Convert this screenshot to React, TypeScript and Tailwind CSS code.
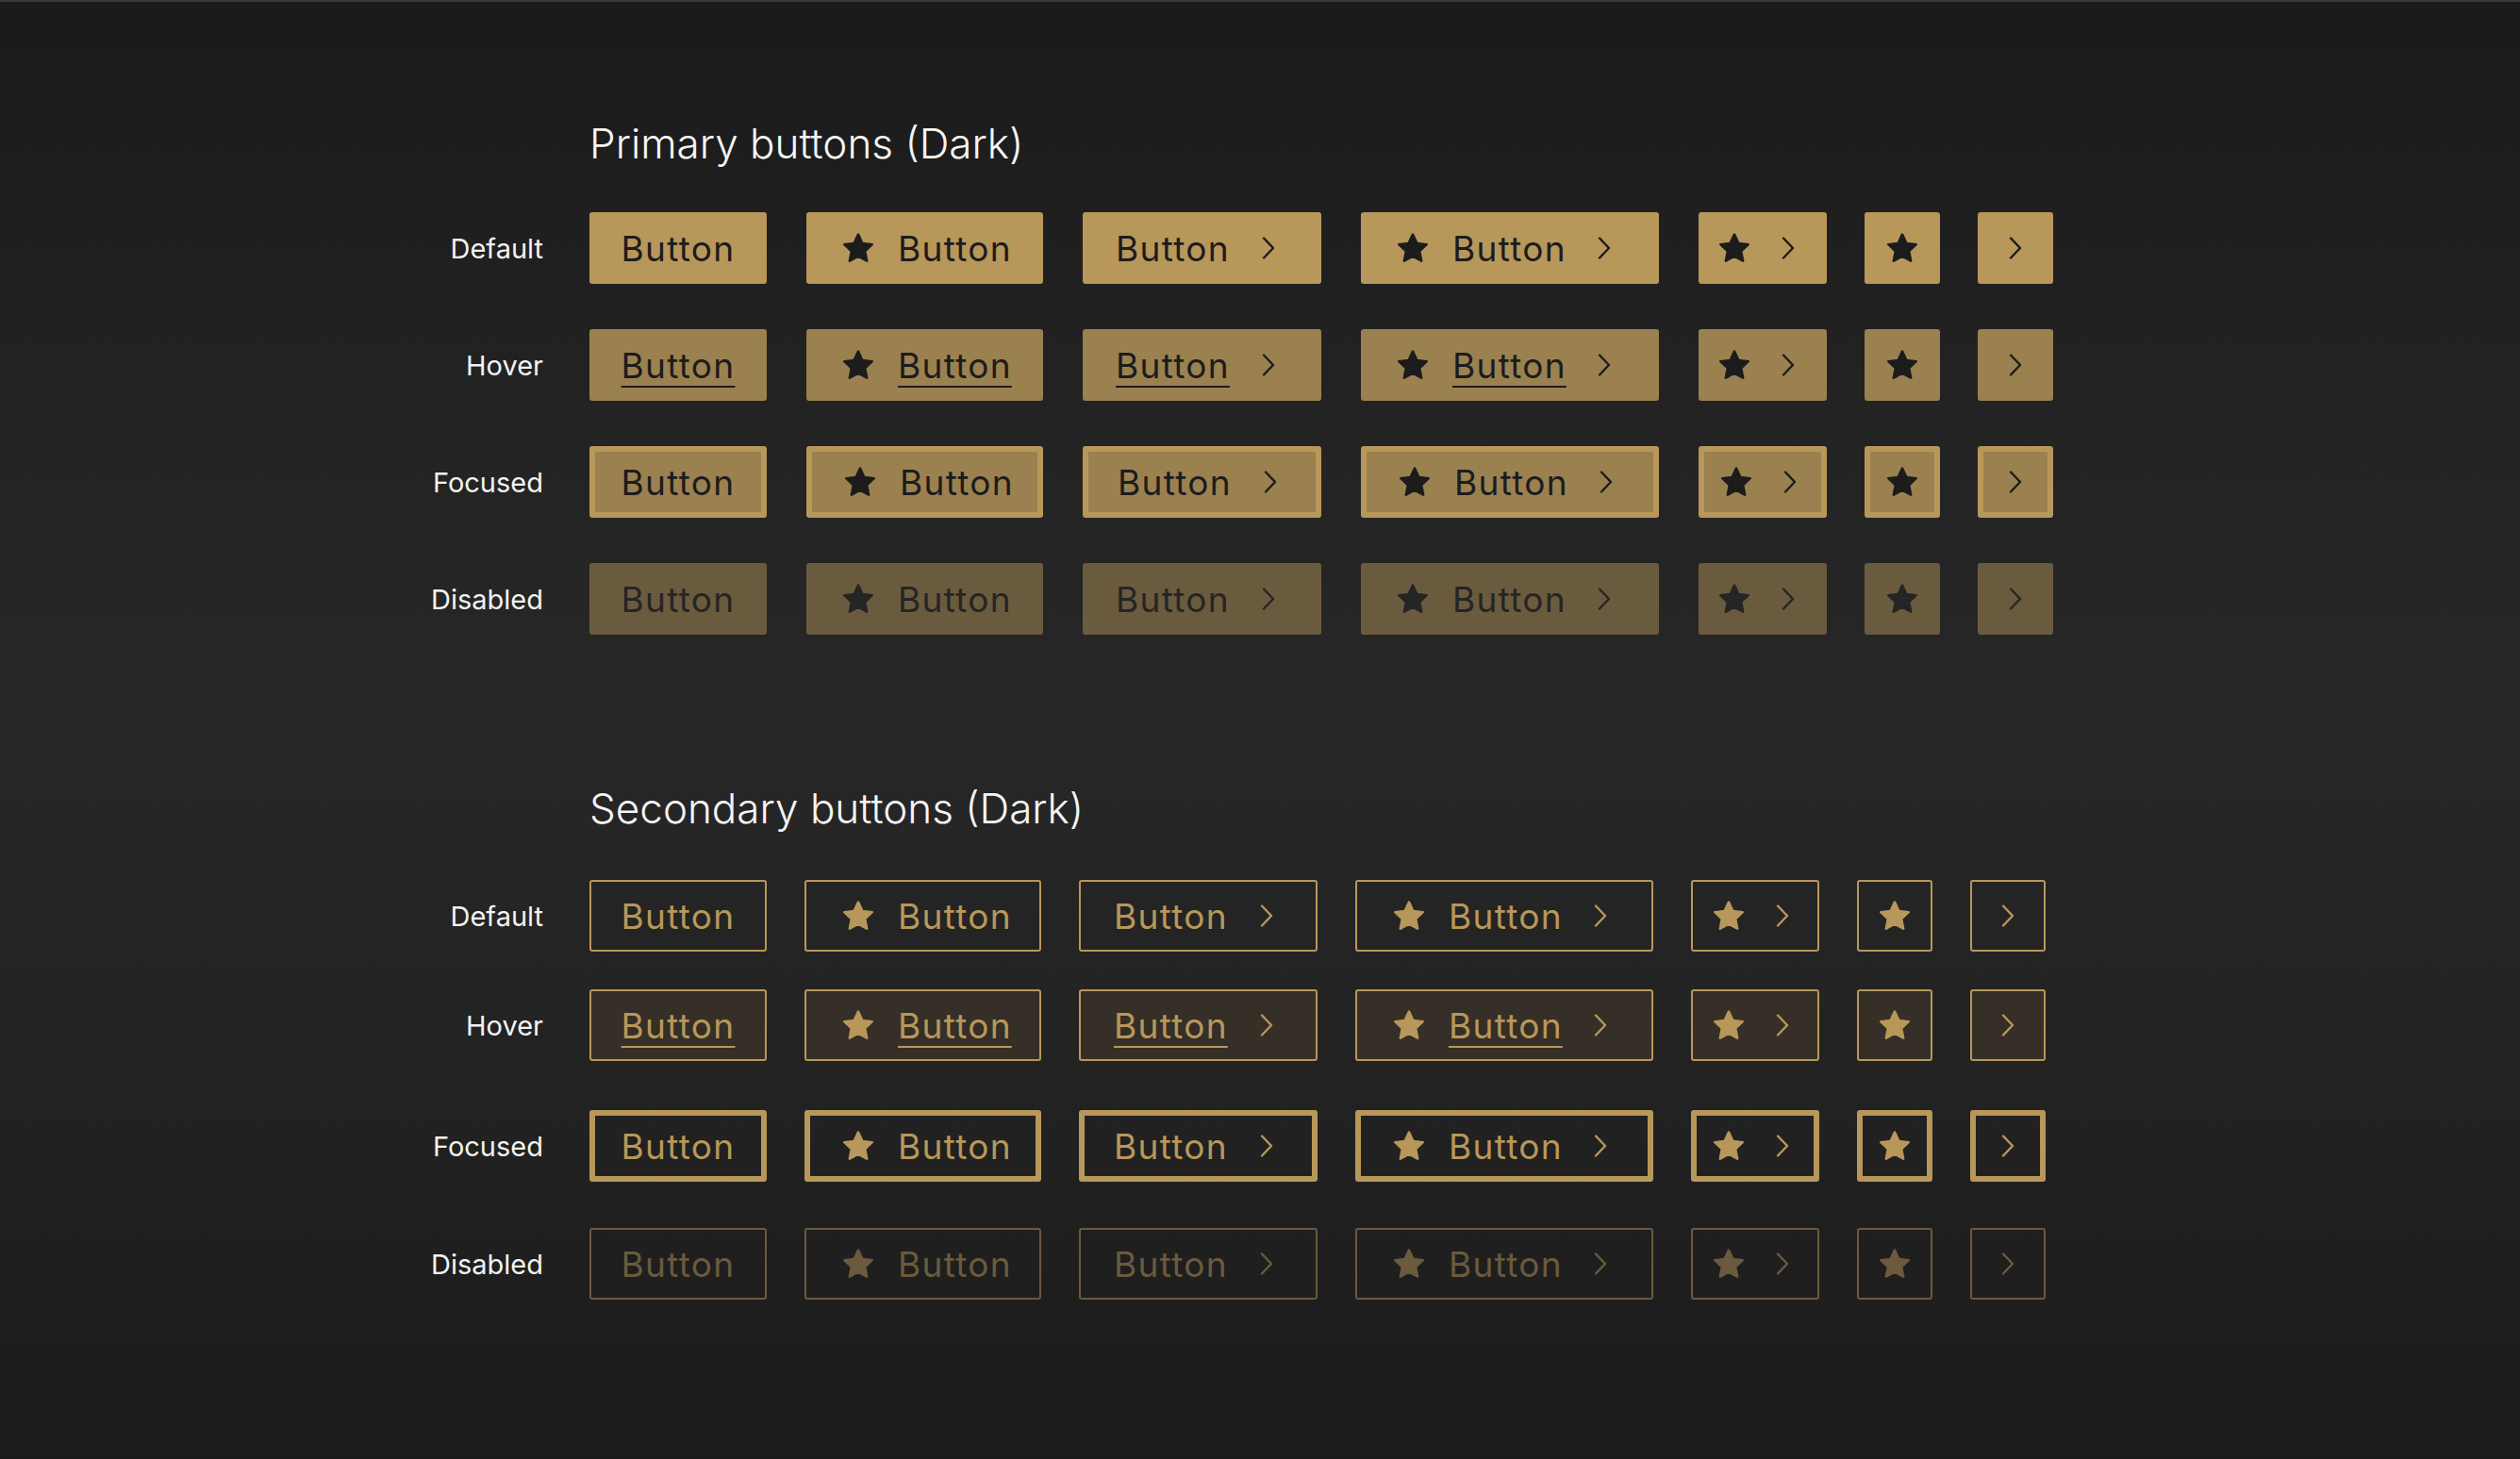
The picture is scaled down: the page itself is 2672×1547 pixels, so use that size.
import React from "react";

type Kind = "text" | "starText" | "textChev" | "starTextChev" | "starChev" | "star" | "chev";
type State = "default" | "hover" | "focused" | "disabled";
type Tone = "primary" | "secondary";

// width of each button type, plus the space before it in the primary and secondary sets
const KINDS: { kind: Kind; w: string; pm: string; sm: string }[] = [
  { kind: "text", w: "w-[188px]", pm: "", sm: "" },
  { kind: "starText", w: "w-[251px]", pm: "ml-[42px]", sm: "ml-[40px]" },
  { kind: "textChev", w: "w-[253px]", pm: "ml-[42px]", sm: "ml-[40px]" },
  { kind: "starTextChev", w: "w-[316px]", pm: "ml-[42px]", sm: "ml-[40px]" },
  { kind: "starChev", w: "w-[136px]", pm: "ml-[42px]", sm: "ml-[40px]" },
  { kind: "star", w: "w-[80px]", pm: "ml-[40px]", sm: "ml-[40px]" },
  { kind: "chev", w: "w-[80px]", pm: "ml-[40px]", sm: "ml-[40px]" },
];

const STATES: { state: State; label: string }[] = [
  { state: "default", label: "Default" },
  { state: "hover", label: "Hover" },
  { state: "focused", label: "Focused" },
  { state: "disabled", label: "Disabled" },
];

function StarIcon() {
  return (
    <svg viewBox="1.9 1.6 20.2 20.2" className="w-[32px] h-[32px] shrink-0" aria-hidden="true">
      <polygon
        points="12,2.6 14.8,8.5 21.3,9.3 16.5,13.8 17.8,20.3 12,17.1 6.2,20.3 7.5,13.8 2.7,9.3 9.2,8.5"
        fill="currentColor"
        stroke="currentColor"
        strokeWidth="1.6"
        strokeLinejoin="round"
      />
    </svg>
  );
}

function ChevronIcon() {
  return (
    <svg viewBox="0 0 14 24" className="w-[14px] h-[24px] shrink-0" aria-hidden="true">
      <polyline
        points="2,1.5 12,12 2,22.5"
        fill="none"
        stroke="currentColor"
        strokeWidth="2.4"
        strokeLinecap="round"
        strokeLinejoin="round"
      />
    </svg>
  );
}

function boxClasses(tone: Tone, state: State) {
  if (tone === "primary") {
    switch (state) {
      case "default":
        return "bg-[#b8975a] text-[#1c1c1c]";
      case "hover":
        return "bg-[#9b8150] text-[#1c1c1c]";
      case "focused":
        return "bg-[#9b8150] text-[#1c1c1c] border-[6px] border-[#b8975a]";
      case "disabled":
        return "bg-[#6b5b3e] text-[#252525]";
    }
  }
  switch (state) {
    case "default":
      return "border-2 border-[#b8975a] text-[#b8975a]";
    case "hover":
      return "bg-[#352f27] border-2 border-[#b8975a] text-[#b8975a]";
    case "focused":
      return "border-[6px] border-[#b8975a] text-[#b8975a]";
    case "disabled":
      return "border-2 border-[#6b5a3d] text-[#6b5a3d]";
  }
}

function Label({ hover }: { hover: boolean }) {
  return (
    <span
      className={
        hover
          ? "leading-none tracking-[0.035em] underline decoration-[1.5px] underline-offset-[8px]"
          : "leading-none tracking-[0.035em]"
      }
    >
      Button
    </span>
  );
}

function DemoButton({ tone, state, kind, w, m }: { tone: Tone; state: State; kind: Kind; w: string; m: string }) {
  const hover = state === "hover";
  const base =
    "box-border h-[76px] rounded-[3px] flex items-center shrink-0 text-[37px] " +
    w +
    " " +
    m +
    " " +
    boxClasses(tone, state);
  // focused buttons carry a thicker border, so the inner padding shrinks by the same amount
  const thick = state === "focused";

  if (kind === "text") {
    return (
      <div className={base + " justify-center"}>
        <Label hover={hover} />
      </div>
    );
  }
  if (kind === "starText") {
    return (
      <div className={base + (thick ? " pl-[35px]" : " pl-[39px]") + " gap-[26px]"}>
        <StarIcon />
        <Label hover={hover} />
      </div>
    );
  }
  if (kind === "textChev") {
    return (
      <div className={base + (thick ? " pl-[31px]" : " pl-[35px]")}>
        <Label hover={hover} />
        <span className="ml-[34px] flex">
          <ChevronIcon />
        </span>
      </div>
    );
  }
  if (kind === "starTextChev") {
    return (
      <div className={base + (thick ? " pl-[35px]" : " pl-[39px]")}>
        <StarIcon />
        <span className="ml-[26px] flex">
          <Label hover={hover} />
        </span>
        <span className="ml-[33px] flex">
          <ChevronIcon />
        </span>
      </div>
    );
  }
  if (kind === "starChev") {
    return (
      <div className={base + (thick ? " pl-[18px]" : " pl-[22px]") + " gap-[34px]"}>
        <StarIcon />
        <ChevronIcon />
      </div>
    );
  }
  if (kind === "star") {
    return (
      <div className={base + " justify-center"}>
        <StarIcon />
      </div>
    );
  }
  return (
    <div className={base + " justify-center"}>
      <ChevronIcon />
    </div>
  );
}

function Row({ tone, state, label, className }: { tone: Tone; state: State; label: string; className: string }) {
  return (
    <div className={"flex items-center " + className}>
      <div className="w-[160px] text-right text-[29px] leading-none text-[#f2f2f2] mr-[49px]">{label}</div>
      <div className="flex items-center">
        {KINDS.map((k) => (
          <DemoButton
            key={k.kind}
            tone={tone}
            state={state}
            kind={k.kind}
            w={k.w}
            m={tone === "primary" ? k.pm : k.sm}
          />
        ))}
      </div>
    </div>
  );
}

export default function App() {
  const secondaryGaps = ["mt-[52px]", "mt-[40px]", "mt-[52px]", "mt-[49px]"];
  return (
    <div
      className="min-h-[1547px] w-full border-t-2 border-[#3a3a3a] bg-[linear-gradient(180deg,#1a1a1a_0%,#222222_25%,#272727_48%,#222222_75%,#1b1b1b_100%)] pt-[126px] pl-[416px]"
      style={{ fontFamily: "Inter, 'Noto Sans', sans-serif" }}
    >
      <section>
        <h2 className="ml-[209px] h-[48px] flex items-center text-[44px] font-light leading-none text-[#f5f5f5]">
          Primary buttons (Dark)
        </h2>
        {STATES.map((s, i) => (
          <Row
            key={s.state}
            tone="primary"
            state={s.state}
            label={s.label}
            className={i === 0 ? "mt-[49px]" : "mt-[48px]"}
          />
        ))}
      </section>

      <section className="mt-[160px]">
        <h2 className="ml-[209px] h-[48px] flex items-center text-[44px] font-light leading-none text-[#f5f5f5]">
          Secondary buttons (Dark)
        </h2>
        {STATES.map((s, i) => (
          <Row key={s.state} tone="secondary" state={s.state} label={s.label} className={secondaryGaps[i]} />
        ))}
      </section>
    </div>
  );
}
